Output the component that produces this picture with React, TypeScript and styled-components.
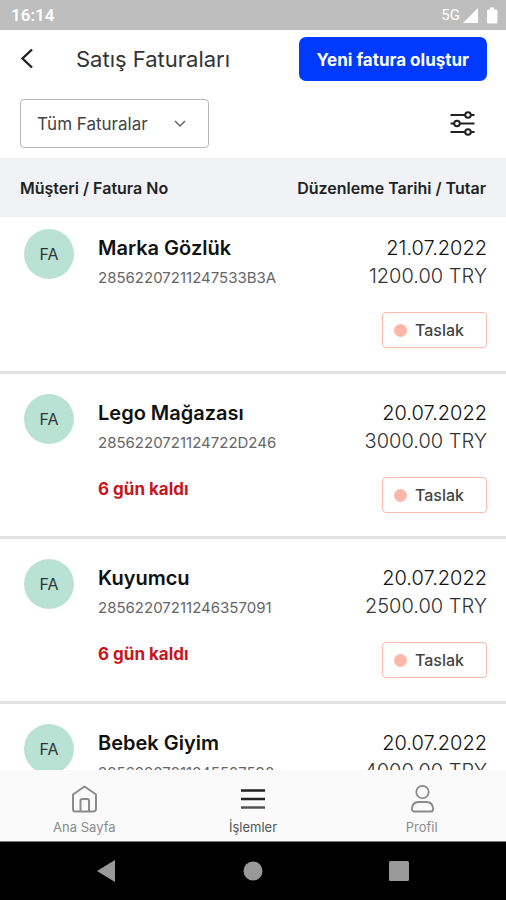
import React from "react";
import styled, { createGlobalStyle } from "styled-components";

const GlobalStyle = createGlobalStyle`
  *, *::before, *::after { box-sizing: border-box; }
  body { margin: 0; background: #fff; color: #1c1c1e; font-family: Inter, "Liberation Sans", sans-serif; }
  button, select { font-family: inherit; }
`;

const Screen = styled.div`
  display: flex;
  flex-direction: column;
  height: 100vh;
  overflow: hidden;
`;

const StatusBar = styled.div`
  display: flex;
  align-items: center;
  justify-content: space-between;
  flex: none;
  height: 30px;
  padding: 0 8px 0 11px;
  background: #bebebe;
  color: #fff;
  font-family: Roboto, sans-serif;
`;

const Clock = styled.span`
  font-size: 17px;
  font-weight: 600;
`;

const Signals = styled.div`
  display: flex;
  align-items: center;
  font-size: 15px;

  > svg { margin-left: 3px; }
  > svg + svg { margin-left: 8px; }
`;

const Header = styled.header`
  display: flex;
  align-items: center;
  flex: none;
  padding: 7px 19px 0;
`;

const BackButton = styled.button`
  display: flex;
  flex: none;
  width: 57px;
  padding: 0;
  border: 0;
  background: none;
  color: #222;
`;

const Title = styled.h1`
  flex: 1;
  margin: 0;
  font-size: 22px;
  line-height: 28px;
  font-weight: 400;
  color: #333;
`;

const CreateButton = styled.button`
  height: 44px;
  padding: 1px 18px 0;
  border: 0;
  border-radius: 7px;
  background: #0039ff;
  color: #fff;
  font-size: 17px;
  font-weight: 700;
  white-space: nowrap;
`;

const Filters = styled.div`
  display: flex;
  align-items: center;
  justify-content: space-between;
  flex: none;
  padding: 18px 30px 10px 20px;
`;

const SelectBox = styled.div`
  display: grid;
  align-items: center;
  width: 189px;

  > * { grid-area: 1 / 1; }
  > svg { justify-self: end; margin-right: 22px; pointer-events: none; }
`;

const Select = styled.select`
  appearance: none;
  width: 100%;
  height: 49px;
  padding: 1px 44px 0 16px;
  border: 1px solid #b5b5b5;
  border-radius: 4px;
  background: #fff;
  color: #444;
  font-size: 17px;
`;

const IconButton = styled.button`
  display: flex;
  padding: 0;
  border: 0;
  background: none;
  color: #222;
`;

const ListArea = styled.main`
  flex: 1;
  min-height: 0;
  overflow: hidden auto;
  scrollbar-width: none;
`;

const Table = styled.table`
  width: 100%;
  border-spacing: 0;
`;

const HeadCell = styled.th<{ $end?: boolean }>`
  position: sticky;
  top: 0;
  height: 59px;
  padding: 0 20px;
  background: #f0f2f6;
  color: #222;
  font-size: 16px;
  font-weight: 600;
  white-space: nowrap;
  text-align: ${(p) => (p.$end ? "right" : "left")};
`;

const Cell = styled.td<{ $end?: boolean }>`
  padding: ${(p) => (p.$end ? "25px 19px 23px 0" : "20px 0 23px 24px")};
  border-bottom: 3px solid #e2e2e2;
  vertical-align: top;
  text-align: ${(p) => (p.$end ? "right" : "left")};

  tr:first-child > & { padding-top: ${(p) => (p.$end ? 17 : 12)}px; }
`;

const Customer = styled.div`
  display: flex;
  gap: 24px;
`;

const Avatar = styled.span`
  display: flex;
  align-items: center;
  justify-content: center;
  flex: none;
  width: 50px;
  height: 50px;
  border-radius: 50%;
  background: #b9e2d5;
  color: #333;
  font-size: 16px;
`;

const CustomerName = styled.div`
  margin-top: 7px;
  font-size: 20px;
  line-height: 24px;
  font-weight: 600;
  color: #111;
  white-space: nowrap;
`;

const InvoiceNo = styled.div`
  margin-top: 8px;
  font-size: 15px;
  line-height: 20px;
  color: #666;
`;

const Remaining = styled.div`
  margin-top: 26px;
  font-size: 17px;
  line-height: 20px;
  font-weight: 700;
  color: #c9151b;
`;

const Amount = styled.div<{ $muted?: boolean }>`
  font-size: 20px;
  line-height: 28px;
  font-weight: 300;
  color: ${(p) => (p.$muted ? "#333" : "#111")};
  white-space: nowrap;
`;

const Status = styled.span`
  display: inline-flex;
  align-items: center;
  gap: 8px;
  height: 36px;
  margin-top: 22px;
  padding: 0 22px 0 11px;
  border: 1px solid #fbb9ac;
  border-radius: 4px;
  color: #444;
  font-size: 16px;
  font-weight: 500;
  vertical-align: top;

  &::before {
    content: "";
    width: 13px;
    height: 13px;
    border-radius: 50%;
    background: #fcb7a8;
  }
`;

const TabBar = styled.nav`
  display: grid;
  grid-template-columns: repeat(3, 1fr);
  flex: none;
  height: 72px;
  border-bottom: 1px solid #777;
  background: #fafafa;
`;

const Tab = styled.a<{ $active?: boolean }>`
  display: flex;
  flex-direction: column;
  align-items: center;
  gap: 4px;
  padding-top: 14px;
  color: ${(p) => (p.$active ? "#555" : "#8b8b8e")};
  font-size: 13px;
  line-height: 18px;
  text-decoration: none;
`;

const SystemBar = styled.footer`
  display: grid;
  grid-template-columns: repeat(3, 146px);
  justify-content: center;
  flex: none;
  height: 58px;
  background: #000;
`;

const SystemButton = styled.button`
  display: flex;
  align-items: center;
  justify-content: center;
  padding: 0;
  border: 0;
  background: none;
`;

const invoices = [
  { name: "Marka Gözlük", no: "28562207211247533B3A", date: "21.07.2022", amount: "1200.00 TRY" },
  { name: "Lego Mağazası", no: "2856220721124722D246", date: "20.07.2022", amount: "3000.00 TRY", left: "6 gün kaldı" },
  { name: "Kuyumcu", no: "28562207211246357091", date: "20.07.2022", amount: "2500.00 TRY", left: "6 gün kaldı" },
  { name: "Bebek Giyim", no: "28562207211245527590", date: "20.07.2022", amount: "4000.00 TRY" },
];

const HomeIcon = () => (
  <svg width="28" height="30" viewBox="0 0 28 30" fill="none" stroke="currentColor" strokeWidth="2" strokeLinejoin="round">
    <path d="M3 10.500 14.500 2.500l11.500 8v14.500a2.500 2.500 0 0 1-2.500 2.500h-18A2.500 2.500 0 0 1 3 25z" />
    <path d="M10.500 27V16.500a1.500 1.500 0 0 1 1.500-1.500h5.500a1.500 1.500 0 0 1 1.500 1.500V27" />
  </svg>
);

const MenuIcon = () => (
  <svg width="28" height="30" viewBox="0 0 28 30" fill="none" stroke="#222" strokeWidth="2.500">
    <path d="M2 6.500h24M2 15h24" />
    <path d="M2 23.500h24" stroke="#555" />
  </svg>
);

const ProfileIcon = () => (
  <svg width="28" height="30" viewBox="0 0 28 30" fill="none" stroke="currentColor" strokeWidth="1.800">
    <circle cx="14.500" cy="8" r="6.200" />
    <path d="M4 25.500c0-5 2-7.500 6.500-7.500h8c4.500 0 6.500 2.500 6.500 7.500 0 1.300-.7 2-2 2H6c-1.300 0-2-.7-2-2z" />
  </svg>
);

export default function App() {
  return (
    <Screen>
      <GlobalStyle />
      <StatusBar>
        <Clock>16:14</Clock>
        <Signals>
          <span>5G</span>
          <svg width="15" height="15" viewBox="0 0 15 15" fill="#fff"><path d="M15 0v15H0z" /></svg>
          <svg width="12" height="17" viewBox="0 0 12 17" fill="#fff">
            <path d="M2 2.500h2V.500h4v2h2q1.500 0 1.500 1.500v11q0 1.500-1.500 1.500H2.500Q1 16.500 1 15V4q0-1.500 1-1.500z" />
          </svg>
        </Signals>
      </StatusBar>

      <Header>
        <BackButton aria-label="Geri">
          <svg width="16" height="22" viewBox="0 0 16 22" fill="none" stroke="currentColor" strokeWidth="2.400">
            <path d="M13 1.500 3.500 10.500 13 19.500" />
          </svg>
        </BackButton>
        <Title>Satış Faturaları</Title>
        <CreateButton>Yeni fatura oluştur</CreateButton>
      </Header>

      <Filters>
        <SelectBox>
          <Select aria-label="Fatura filtresi" defaultValue="all">
            <option value="all">Tüm Faturalar</option>
          </Select>
          <svg width="14" height="10" viewBox="0 0 14 10" fill="none" stroke="#666" strokeWidth="1.500">
            <path d="m2 2 5 5 5-5" />
          </svg>
        </SelectBox>
        <IconButton aria-label="Filtreler">
          <svg width="26" height="26" viewBox="0 0 26 26" fill="#fff" stroke="currentColor" strokeWidth="2">
            <path d="M.500 4h24M.500 12.500h24M.500 21h24" />
            <circle cx="18" cy="4" r="2.800" />
            <circle cx="7" cy="12.500" r="2.800" />
            <circle cx="18" cy="21" r="2.800" />
          </svg>
        </IconButton>
      </Filters>

      <ListArea>
        <Table>
          <thead>
            <tr>
              <HeadCell scope="col">Müşteri / Fatura No</HeadCell>
              <HeadCell scope="col" $end>Düzenleme Tarihi / Tutar</HeadCell>
            </tr>
          </thead>
          <tbody>
            {invoices.map((invoice) => (
              <tr key={invoice.no}>
                <Cell>
                  <Customer>
                    <Avatar>FA</Avatar>
                    <div>
                      <CustomerName>{invoice.name}</CustomerName>
                      <InvoiceNo>{invoice.no}</InvoiceNo>
                      {invoice.left && <Remaining>{invoice.left}</Remaining>}
                    </div>
                  </Customer>
                </Cell>
                <Cell $end>
                  <Amount>{invoice.date}</Amount>
                  <Amount $muted>{invoice.amount}</Amount>
                  <Status>Taslak</Status>
                </Cell>
              </tr>
            ))}
          </tbody>
        </Table>
      </ListArea>

      <TabBar>
        <Tab href="#home"><HomeIcon />Ana Sayfa</Tab>
        <Tab href="#transactions" $active aria-current="page"><MenuIcon />İşlemler</Tab>
        <Tab href="#profile"><ProfileIcon />Profil</Tab>
      </TabBar>

      <SystemBar>
        <SystemButton aria-label="Sistem geri">
          <svg width="20" height="22" viewBox="0 0 20 22" fill="#999"><path d="M18 0v22L0 11z" /></svg>
        </SystemButton>
        <SystemButton aria-label="Ana ekran">
          <svg width="20" height="20" viewBox="0 0 20 20" fill="#999"><circle cx="10" cy="10" r="9.500" /></svg>
        </SystemButton>
        <SystemButton aria-label="Son uygulamalar">
          <svg width="20" height="20" viewBox="0 0 20 20" fill="#999"><rect width="20" height="20" rx="1.500" /></svg>
        </SystemButton>
      </SystemBar>
    </Screen>
  );
}
